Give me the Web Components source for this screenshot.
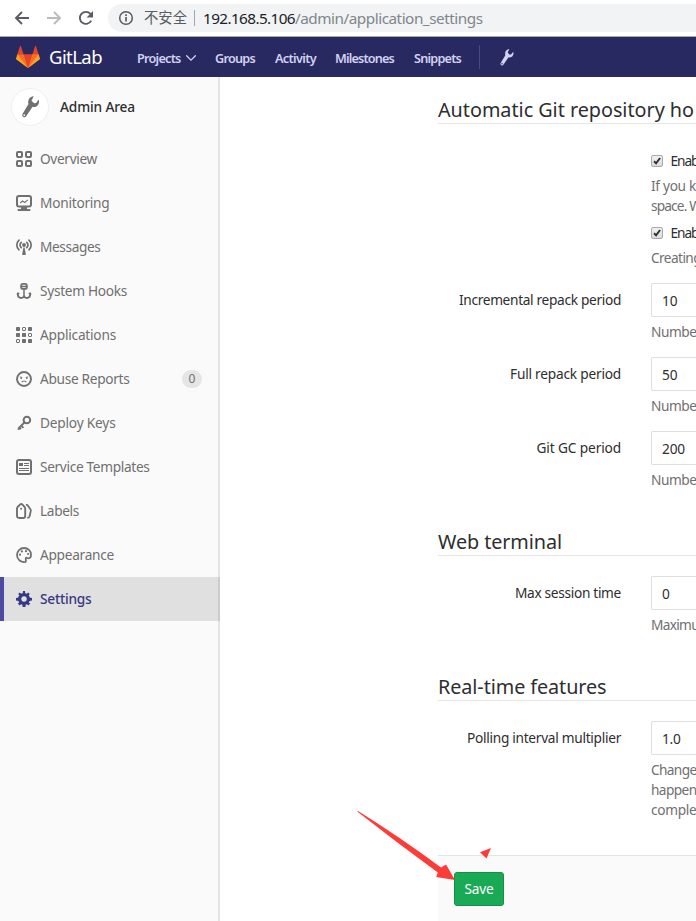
<!DOCTYPE html>
<html lang="en">
<head>
<meta charset="utf-8">
<title>Application settings · Admin Area · GitLab</title>
<style>
html,body{margin:0;height:100%;overflow:hidden;background:#fff}
body{font:13.700px/20px "Noto Sans","Noto Sans CJK SC",sans-serif;color:#2e2e2e}
</style>
</head>
<body>
<admin-app></admin-app>
<script>
const ICONS = {
  back: '<path d="M15 8H2.5M8 2 2 8l6 6" fill="none" stroke="currentColor" stroke-width="1.9"/>',
  forward: '<path d="M1 8h12.5M8 2l6 6-6 6" fill="none" stroke="currentColor" stroke-width="1.9"/>',
  reload: '<path d="M13.2 10.6A6 6 0 1 1 12.4 3.9L13.6 5" fill="none" stroke="currentColor" stroke-width="1.9"/><path d="M15 1v6.4H8.6z" fill="currentColor"/>',
  info: '<circle cx="8" cy="8" r="6.3" fill="none" stroke="currentColor" stroke-width="1.5"/><path d="M7.2 7.1h1.7v4.4H7.2zM7.2 4.3h1.7v1.6H7.2z" fill="currentColor"/>',
  chevron: '<path d="M3 5.500 8 10.400l5-4.900" fill="none" stroke="currentColor" stroke-width="1.5" stroke-linecap="round"/>',
  wrench: '<path fill="currentColor" fill-rule="evenodd" d="M10.7.1 9.1 3.4 11 5.3l1.5-.3 1.7-2.5c.9 2 .1 4.2-1.6 5.1-.9.5-1.9.5-2.7.2L5.1 14.9a1.6 1.6 0 0 1-2.7-1.6L6.9 5.9C6 3 7.8.2 10.7.1zM3.8 13.2a.7.7 0 1 0 0 1.4.7.7 0 0 0 0-1.4z"/>',
  overview: '<g fill="none" stroke="currentColor" stroke-width="2"><rect x="1" y="1" width="5" height="5" rx="1"/><rect x="10" y="1" width="5" height="5" rx="1"/><rect x="1" y="10" width="5" height="5" rx="1"/><rect x="10" y="10" width="5" height="5" rx="1"/></g>',
  monitor: '<rect x="1" y="1" width="14" height="10.6" rx="2" fill="none" stroke="currentColor" stroke-width="2"/><path d="m4.2 8 2.3-2 2.2 1.5 3.1-2.7" fill="none" stroke="currentColor" stroke-width="1.1"/><path d="M5 12h6v2h2.5a.9.9 0 0 1 0 2h-11a.9.9 0 0 1 0-2H5z" fill="currentColor"/>',
  messages: '<g fill="none" stroke="currentColor" stroke-width="1.7" stroke-linecap="round"><path d="M3 1.2c-2.9 2.700-2.9 7 0 9.6M13 1.2c2.9 2.700 2.9 7 0 9.6M5.3 3.3c-1.7 1.5-1.7 3.9 0 5.4M10.7 3.3c1.7 1.5 1.7 3.9 0 5.4"/></g><circle cx="8" cy="6" r="1.9" fill="currentColor"/><path d="M7.4 8.5h1.2L9.8 15a.8.8 0 0 1-.8 1H7a.8.8 0 0 1-.8-1z" fill="currentColor"/>',
  hook: '<rect x="5.1" y=".9" width="5.8" height="5" rx="2" fill="none" stroke="currentColor" stroke-width="1.8"/><path d="M5 3.5h6M8 6v8.8" stroke="currentColor" stroke-width="1.5"/><path d="M1.9 10.2v1.6c0 2 1.5 3.2 3.2 3.2C6.8 15 8 14 8 12.6 8 14 9.2 15 10.9 15c1.700 0 3.200-1.200 3.200-3.200v-1.600" fill="none" stroke="currentColor" stroke-width="1.8"/><path d="m.2 11.600 1.700-2.600 2 2.100zM15.800 11.600l-1.700-2.600-2 2.100z" fill="currentColor"/>',
  apps: '<g fill="currentColor"><rect width="4" height="4" rx=".8"/><rect x="12" width="4" height="4" rx=".8"/><rect y="6" width="4" height="4" rx=".8"/><rect x="6" y="6" width="4" height="4" rx=".8"/><rect x="6" y="12" width="4" height="4" rx=".8"/><rect x="12" y="12" width="4" height="4" rx=".8"/></g><g fill="none" stroke="currentColor"><rect x="6.500" y=".5" width="3" height="3" rx=".5"/><rect x="12.500" y="6.500" width="3" height="3" rx=".5"/><rect x=".5" y="12.500" width="3" height="3" rx=".5"/></g>',
  abuse: '<circle cx="8" cy="8" r="7" fill="none" stroke="currentColor" stroke-width="1.900"/><path d="M5.700 11.300c.8-1.700 3.800-1.700 4.600 0" fill="none" stroke="currentColor" stroke-width="1.100"/><path d="m3.800 5.700 2.400.8M12.200 5.700l-2.400.8" stroke="currentColor" stroke-width=".7"/><circle cx="5.200" cy="7" r=".9" fill="currentColor"/><circle cx="10.800" cy="7" r=".9" fill="currentColor"/>',
  key: '<circle cx="10.900" cy="5" r="3.300" fill="none" stroke="currentColor" stroke-width="2"/><path d="M8.400 7.500 2.300 13.700M5.400 10.800l2 2M3.200 12.500l1.700 1.700" fill="none" stroke="currentColor" stroke-width="1.900"/><path d="m2.300 11.900-.8 3.100 2.700-.4z" fill="currentColor"/>',
  template: '<rect x="1" y="1" width="14" height="14" rx="2" fill="none" stroke="currentColor" stroke-width="2"/><path d="M3 4h4v3H3z" fill="currentColor"/><path d="M8 4.500h5M8 6.500h5M3 9.500h10M3 11.500h10" stroke="currentColor"/>',
  labels: '<path d="M1 5.500c0-.6.2-1 .6-1.500L4 1.600c.8-.8 1.700-.8 2.500 0L8.700 4c.3.400.5.900.5 1.500V13c0 1.200-.8 2-2 2H3c-1.200 0-2-.8-2-2z" fill="none" stroke="currentColor" stroke-width="1.900"/><circle cx="5.100" cy="5.700" r="1" fill="currentColor"/><path d="M10 1.900c1-.2 1.600.2 2 .9l2.400 3.400c.5.700.5 1 .4 1.700l-1.200 5.300c-.3 1.100-1 1.600-2.300 1.600" fill="none" stroke="currentColor" stroke-width="1.800"/>',
  palette: '<path d="M9.500 14.900C5 15.700 1 12.500 1 8.100 1 4 4.100 1 8 1s7 2.800 7 6.600c0 2.300-1 3.700-2.500 3.700-1.200 0-1.600-.9-2.500-.4-1.100.6.800 2.500-.5 4z" fill="none" stroke="currentColor" stroke-width="1.800"/><g fill="currentColor"><circle cx="5.900" cy="4.400" r="1.100"/><circle cx="10" cy="4.200" r="1.100"/><circle cx="12.100" cy="7" r="1.100"/><circle cx="4" cy="7.700" r="1.100"/></g>',
  gear: '<path fill="none" stroke="currentColor" stroke-width="3.300" d="M8 3.600a4.400 4.400 0 1 0 0 8.800 4.400 4.400 0 0 0 0-8.800z"/><path fill="currentColor" d="M6.700 3 7 0h2l.3 3zM6.200 13l.4 3h2.800l.4-3zM3 6.500 0 7v2.500l3 .5zM13 6.500l3 .5v2.500l-3 .5zM4.300 5.200 2.200 3.100l1.500-1.600L6 3.400zM11.700 5.200l2.100-2.100-1.500-1.600L10 3.400zM4.300 10.800l-2.500 1.700 1.800 1.900L6 12.600zM11.700 10.800l2.500 1.700-1.800 1.900L10 12.600z"/>'
};

function define(name, html, setup) {
  customElements.define(name, class extends HTMLElement {
    constructor() {
      super();
      this.attachShadow({mode: 'open'});
    }
    connectedCallback() {
      if (this.shadowRoot.firstChild) return;
      this.shadowRoot.innerHTML = typeof html === 'function' ? html(this) : html;
      if (setup) setup(this);
    }
  });
}

define('ui-icon', el => `<style>:host{display:block;flex:none;width:var(--size,16px);height:var(--size,16px)}svg{display:block;width:100%;height:100%;overflow:visible}</style>
<svg viewBox="0 0 16 16" aria-hidden="true">${ICONS[el.getAttribute('name')]}</svg>`);

define('gitlab-logo', `<style>:host{display:block;width:24px;height:24px}svg{display:block}</style>
<svg width="24" height="24" viewBox="0 0 36 36"><path fill="#e24329" d="M2 14l9.380 9v-9l-4-12.280c-.205-.632-1.176-.632-1.380 0zM34 14l-9.380 9v-9l4-12.280c.205-.632 1.176-.632 1.380 0zM18 34.380 3 14h30z"/><path fill="#fc6d26" d="M18 34.380 11.380 14H2l4 11zM18 34.380 24.620 14H34l-4 11z"/><path fill="#fca326" d="M2 14 .1 20.160c-.18.565 0 1.200.5 1.560l17.420 12.660zM34 14l1.900 6.160c.18.565 0 1.200-.5 1.560L18 34.380z"/></svg>`);

define('browser-bar', `<style>
:host{display:flex;align-items:center;height:37px;box-sizing:border-box;border-bottom:1px solid #a9a9a9;background:#fff;color:#5a5d61;padding-left:14px}
.fwd{color:#b9bbbd;margin-left:16px}.rel{margin-left:16px}
.box{display:flex;align-items:center;flex:1;height:28px;margin-left:14px;padding-left:10px;border-radius:14px 0 0 14px;background:#f1f3f4;font-size:15.300px}
.box fit-text{margin-top:-1px}
.box .safe{font-size:14.300px;margin-left:10px}.sep{width:1px;height:16px;background:#a5a8ab;margin:0 8px 0 7px}
.host{color:#202124}.path{color:#80868b}
</style>
<ui-icon name="back"></ui-icon><ui-icon class="fwd" name="forward"></ui-icon><ui-icon class="rel" name="reload"></ui-icon>
<div class="box"><ui-icon name="info"></ui-icon><fit-text class="safe" w="43">不安全</fit-text><span class="sep"></span><fit-text class="host" w="92">192.168.5.106</fit-text><fit-text class="path" w="187.500">/admin/application_settings</fit-text></div>`);

define('nav-bar', `<style>
:host{display:flex;align-items:center;height:40px;background:#292961;color:#d1d1f0;padding-left:16px;font-size:12.700px;font-weight:600;line-height:20px}
fit-text{margin-top:2px}
.brand{color:#fff;font-size:18.500px;font-weight:400;margin:0 35px 0 9px}
.gap{margin-left:20px}ui-icon{--size:14px}.chev{margin:2px 1px 0 3px}
.sep{width:1px;height:24px;background:#494983;margin:0 18px 0 18px}.tool{--size:17px}
</style>
<gitlab-logo></gitlab-logo><fit-text class="brand" w="53">GitLab</fit-text>
<fit-text w="43.500">Projects</fit-text><ui-icon class="chev" name="chevron"></ui-icon>
<fit-text class="gap" style="margin-left:16.500px" w="40">Groups</fit-text><fit-text class="gap" w="41">Activity</fit-text><fit-text class="gap" style="margin-left:19px" w="59">Milestones</fit-text><fit-text class="gap" w="47">Snippets</fit-text>
<span class="sep"></span><ui-icon class="tool" name="wrench"></ui-icon>`);

define('side-item', el => `<style>
:host{display:flex;align-items:center;height:44px;box-sizing:border-box;padding:0 16px;color:#707070}
:host([active]){background:rgba(0,0,0,.1);box-shadow:inset 4px 0 #4b4ba3;color:#393982;font-weight:500;margin-right:-2px}
fit-text{margin-left:8px}.count{margin-left:auto;width:20px;height:18px;border-radius:9px;background:#e5e5e5;font-size:12px;line-height:18px;text-align:center}
</style>
<ui-icon name="${el.getAttribute('icon')}"></ui-icon><fit-text w="${el.getAttribute('w')}">${el.getAttribute('label')}</fit-text>
${el.hasAttribute('count') ? `<span class="count">${el.getAttribute('count')}</span>` : ''}`);

define('side-bar', `<style>
:host{display:block;width:218px;flex:none;background:#fafafa;border-right:2px solid #e4e4e4}
.head{display:flex;align-items:center;height:60px;padding-left:11px;color:#2e2e2e;font-weight:500}
.avatar{display:grid;place-items:center;width:38px;height:38px;box-sizing:border-box;border-radius:50%;background:#fff;border:1px solid #f0f0f0;color:#707070;margin-right:11px;--size:22px}
</style>
<div class="head"><div class="avatar"><ui-icon name="wrench"></ui-icon></div><fit-text w="75">Admin Area</fit-text></div>
<side-item icon="overview" label="Overview" w="57"></side-item>
<side-item icon="monitor" label="Monitoring" w="69.500"></side-item>
<side-item icon="messages" label="Messages" w="60.500"></side-item>
<side-item icon="hook" label="System Hooks" w="87"></side-item>
<side-item icon="apps" label="Applications" w="76"></side-item>
<side-item icon="abuse" label="Abuse Reports" w="89.500" count="0"></side-item>
<side-item icon="key" label="Deploy Keys" w="75.500"></side-item>
<side-item icon="template" label="Service Templates" w="109.500"></side-item>
<side-item icon="labels" label="Labels" w="39"></side-item>
<side-item icon="palette" label="Appearance" w="74"></side-item>
<side-item icon="gear" label="Settings" w="51.500" active></side-item>`);

define('form-section', el => `<style>
:host{display:block}
h2{margin:0 0 20px;height:28px;line-height:30px;font-size:19.800px;font-weight:400;border-bottom:1px solid #e5e5e5;color:#2e2e2e;box-sizing:content-box}
.rows{display:grid;gap:15px}
</style><h2><fit-text w="${el.getAttribute('w')}">${el.getAttribute('title-text')}</fit-text></h2><div class="rows"><slot></slot></div>`);

define('form-field', el => `<style>
:host{display:grid;grid-template-columns:183px 1fr;column-gap:30px}
.label{text-align:right;padding-top:7px}
.input{height:34px;box-sizing:border-box;border:1px solid #dfdfdf;border-right:0;border-radius:2px 0 0 2px;padding:7px 10px 5px;margin-bottom:5px}
.help{color:#707070}
</style><div class="label"><fit-text w="${el.getAttribute('w')}">${el.getAttribute('label')}</fit-text></div>
<div><div class="input"><fit-text w="${el.getAttribute('vw')}">${el.getAttribute('value')}</fit-text></div><div class="help"><slot></slot></div></div>`);

define('check-field', `<style>
:host{display:block;margin-left:213px}
.line{display:flex;align-items:center;height:20px;margin-bottom:5px;color:#2e2e2e}
.box{width:12px;height:12px;box-sizing:border-box;border:1px solid #a8a8a8;border-radius:2px;background:linear-gradient(#f2f2f2,#dcdcdc);margin-right:7.500px}
svg{display:block}.help{color:#707070}
</style><div class="line"><span class="box"><svg width="10" height="10" viewBox="0 0 10 10"><path d="m2 5.300 2.100 2L8.100 2" fill="none" stroke="#333" stroke-width="2"/></svg></span><slot name="label"></slot></div><div class="help"><slot></slot></div>`);

define('settings-form', `<style>
:host{display:flex;flex-direction:column;flex:1;min-width:0;padding:18px 0 0 218px;overflow:hidden;white-space:nowrap}
.checks{display:grid;gap:7px;padding-top:7px}
form-section + form-section{margin-top:37px}
.foot{flex:1;margin-top:35px;border-top:1px solid #e5e5e5;background:#fafafa;padding:16px}
.save{display:grid;place-items:center;width:50px;height:34px;box-sizing:border-box;border:1px solid #168f48;border-radius:3px;background:#1aaa55;color:#fff}
</style>
<form-section title-text="Automatic Git repository ho" w="256">
<div class="checks"><check-field><fit-text slot="label" w="28">Enab</fit-text><fit-text w="45">If you k</fit-text><br><fit-text w="50">space. W</fit-text></check-field>
<check-field><fit-text slot="label" w="28">Enab</fit-text><fit-text w="50">Creating</fit-text></check-field></div>
<form-field label="Incremental repack period" w="162" value="10" vw="15.500"><fit-text w="45.500">Numbe</fit-text></form-field>
<form-field label="Full repack period" w="111" value="50" vw="15.500"><fit-text w="45.500">Numbe</fit-text></form-field>
<form-field label="Git GC period" w="84.500" value="200" vw="23"><fit-text w="45.500">Numbe</fit-text></form-field>
</form-section>
<form-section title-text="Web terminal" w="124"><form-field label="Max session time" w="106" value="0" vw="8"><fit-text w="48">Maximu</fit-text></form-field></form-section>
<form-section title-text="Real-time features" w="168.500"><form-field label="Polling interval multiplier" w="154" value="1.0" vw="18.500"><fit-text w="45.500">Change</fit-text><br><fit-text w="45.500">happen</fit-text><br><fit-text w="45.500">comple</fit-text></form-field></form-section>
<div class="foot"><div class="save"><fit-text w="29">Save</fit-text></div></div>`);

/* Red pointer drawn over the page towards the Save button. */
define('pointer-overlay', `<style>:host{position:absolute;left:350px;top:800px;width:150px;height:90px;pointer-events:none}svg{display:block}</style>
<svg width="150" height="90" viewBox="350 800 150 90"><path fill="#fd3b38" d="M358 811 Q400 837 441 867.500l5-3 9 15.500-18.800-3 1.600-4.600Q396 842 357.500 811.700zM480 852.300l11-4.200-4.500 10.300z"/></svg>`);

define('admin-app', `<style>
:host{display:flex;flex-direction:column;position:relative;width:696px;height:921px;overflow:hidden}
.body{display:flex;flex:1;min-height:0}
</style><browser-bar></browser-bar><nav-bar></nav-bar><div class="body"><side-bar></side-bar><settings-form></settings-form></div><pointer-overlay></pointer-overlay>`);

/* Inline label whose tracking is adjusted so that it spans the width in "w". */
define('fit-text', '<style>:host{display:inline-block;white-space:nowrap;flex:none}</style><slot></slot>', el => {
  const width = parseFloat(el.getAttribute('w'));
  const natural = el.getBoundingClientRect().width;
  el.style.letterSpacing = ((width - natural) / el.textContent.length) + 'px';
  el.style.width = width + 'px';
});
</script>
</body>
</html>
